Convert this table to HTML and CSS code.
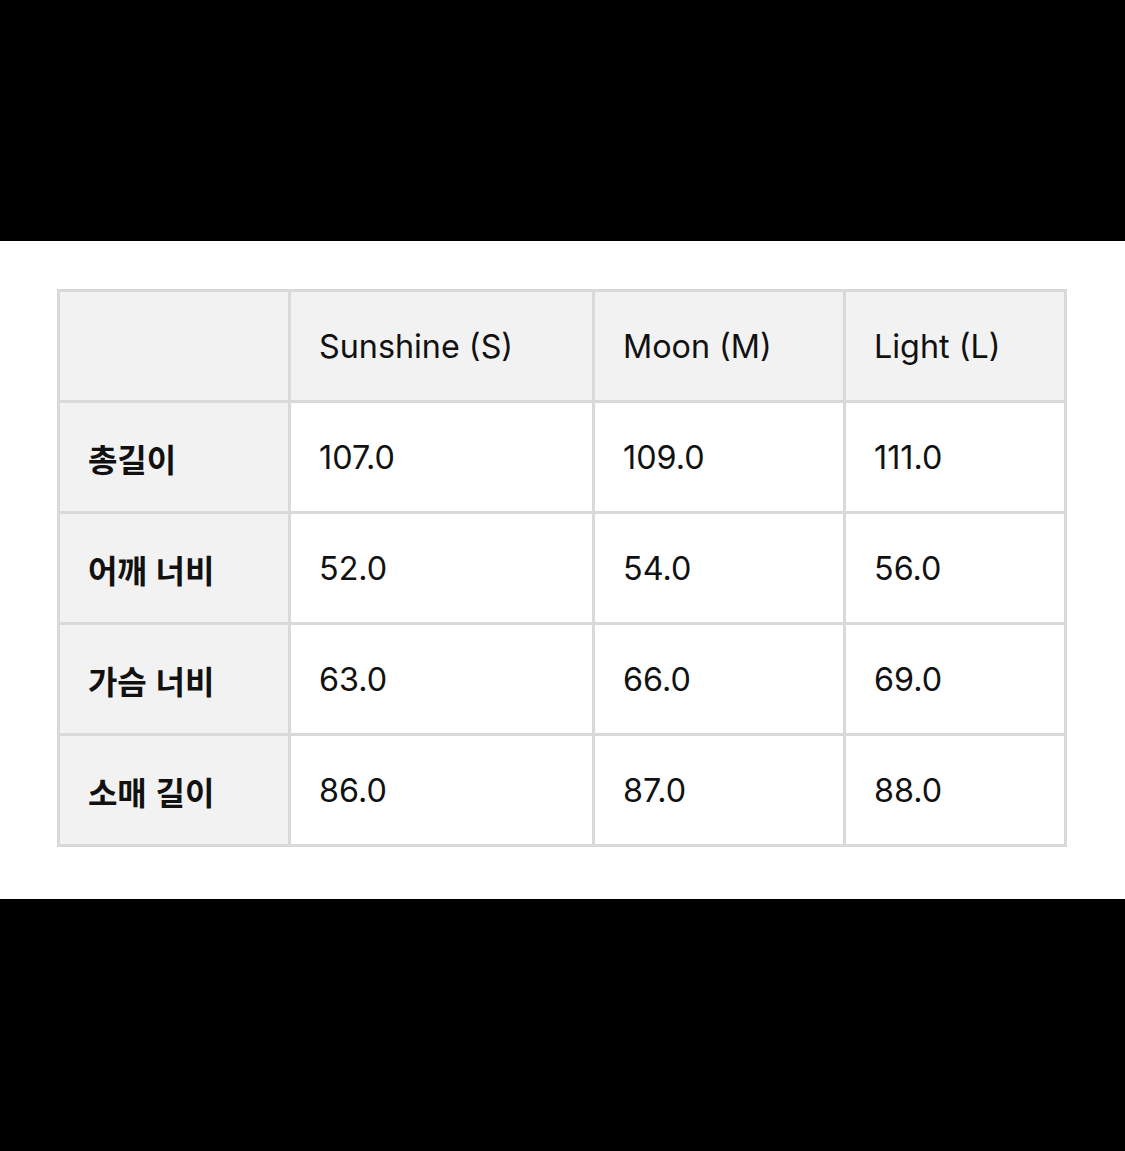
FILE: index.html
```html
<!DOCTYPE html>
<html lang="ko">
<head>
<meta charset="utf-8">
<title>Size chart</title>
<link rel="stylesheet" href="styles.css">
</head>
<body>
<div class="band band-top"></div>
<main class="sheet">
  <div class="chart">
    <div class="cell head corner"></div>
    <div class="cell head">Sunshine (S)</div>
    <div class="cell head">Moon (M)</div>
    <div class="cell head">Light (L)</div>

    <div class="cell label">총길이</div>
    <div class="cell">107.0</div>
    <div class="cell">109.0</div>
    <div class="cell">111.0</div>

    <div class="cell label">어깨 너비</div>
    <div class="cell">52.0</div>
    <div class="cell">54.0</div>
    <div class="cell">56.0</div>

    <div class="cell label">가슴 너비</div>
    <div class="cell">63.0</div>
    <div class="cell">66.0</div>
    <div class="cell">69.0</div>

    <div class="cell label">소매 길이</div>
    <div class="cell">86.0</div>
    <div class="cell">87.0</div>
    <div class="cell">88.0</div>
  </div>
</main>
<div class="band band-bottom"></div>
</body>
</html>
```
FILE: styles.css
```css
html, body {
  margin: 0;
  padding: 0;
  background: #000;
}
body {
  width: 1125px;
  height: 1151px;
  overflow: hidden;
  font-family: Inter, "Noto Sans CJK KR", sans-serif;
  color: #111;
}
.band-top {
  height: 241px;
  background: #000;
}
.band-bottom {
  height: 252px;
  background: #000;
}
.sheet {
  height: 658px;
  background: #fff;
  box-sizing: border-box;
  padding: 48px 0 0 57px;
}
.chart {
  display: grid;
  grid-template-columns: 228px 301px 248px 218px;
  grid-auto-rows: 108px;
  gap: 3px;
  padding: 3px;
  width: max-content;
  background: #d9d9d9;
}
.cell {
  background: #fff;
  display: flex;
  align-items: center;
  padding-left: 28px;
  padding-top: 1px;
  font-size: 32.3px;
}
.head {
  background: #f2f2f2;
}
.label {
  background: #f2f2f2;
  font-family: "Noto Sans CJK KR", sans-serif;
  font-weight: 700;
  font-size: 32px;
  letter-spacing: -0.1px;
}
```
